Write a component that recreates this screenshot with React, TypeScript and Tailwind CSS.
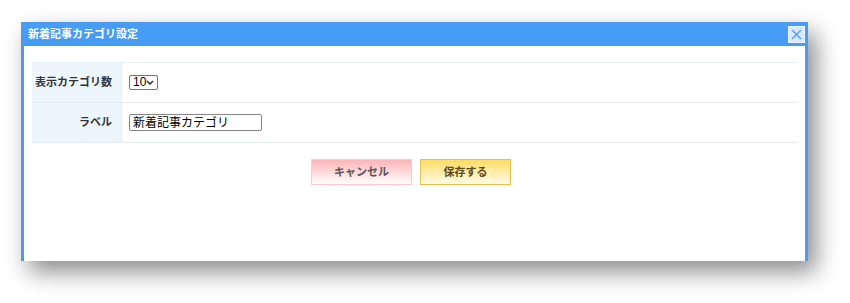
import React, { useState } from 'react';

const font = { fontFamily: '"Liberation Sans", "Noto Sans CJK JP", sans-serif' };

export default function App() {
  const [count, setCount] = useState('10');
  const [label, setLabel] = useState('新着記事カテゴリ');

  return (
    <div className="w-[850px] h-[303px] bg-white pt-[22px] pl-[21px] overflow-hidden" style={font}>
      <div className="w-[787px] h-[239px] bg-[#479cf4] px-[3px] flex flex-col shadow-[8px_11px_22px_rgba(0,0,0,0.45)]">
        {/* title bar */}
        <div className="h-[24px] flex items-center justify-between pl-[4px]">
          <span className="text-[11px] font-bold text-white leading-none">新着記事カテゴリ設定</span>
          <button className="w-[17px] h-[17px] bg-[#d9e8fb] border border-[#eef5fe] flex items-center justify-center">
            <svg width="11" height="11" viewBox="0 0 11 11">
              <path d="M1 1L10 10M10 1L1 10" stroke="#4a9ef5" strokeWidth="1.3" fill="none" />
            </svg>
          </button>
        </div>

        {/* body */}
        <div className="flex-1 bg-white pt-[16px] pl-[8px] pr-[7px]">
          <div className="border-t border-[#e8eef5]">
            <div className="flex h-[40px] border-b border-[#e3ebf3]">
              <div className="w-[90px] bg-[#eef6fd] border-r border-[#e3ebf3] flex items-center justify-end pr-[9px] text-[11px] font-bold text-[#333]">
                表示カテゴリ数
              </div>
              <div className="flex-1 flex items-center pl-[7px]">
                <div className="relative flex">
                  <select
                    value={count}
                    onChange={e => setCount(e.target.value)}
                    className="appearance-none w-[29px] h-[15px] border border-[#767676] rounded-[2px] bg-white text-[12px] leading-[13px] py-0 pl-[3px] text-black"
                  >
                    {['5', '10', '15', '20'].map(v => (
                      <option key={v} value={v}>{v}</option>
                    ))}
                  </select>
                  <svg className="absolute right-[4px] top-[5px] pointer-events-none" width="8" height="5" viewBox="0 0 8 5">
                    <path d="M1 1L4 4L7 1" stroke="#222" strokeWidth="1.4" fill="none" />
                  </svg>
                </div>
              </div>
            </div>
            <div className="flex h-[40px] border-b border-[#e3ebf3]">
              <div className="w-[90px] bg-[#eef6fd] border-r border-[#e3ebf3] flex items-center justify-end pr-[9px] text-[11px] font-bold text-[#333]">
                ラベル
              </div>
              <div className="flex-1 flex items-center pl-[7px]">
                <input
                  value={label}
                  onChange={e => setLabel(e.target.value)}
                  className="w-[133px] h-[17px] border border-[#858585] rounded-[2px] px-[3px] text-[12px] text-black"
                />
              </div>
            </div>
          </div>

          <div className="flex justify-center gap-[8px] mt-[16px] pr-[8px]">
            <button className="w-[101px] h-[26px] border border-[#ffc9cc] bg-gradient-to-b from-[#ffb3b7] to-white text-[11px] font-bold text-[#555]">
              キャンセル
            </button>
            <button className="w-[91px] h-[26px] border border-[#e6c04e] bg-gradient-to-b from-[#ffdc5e] to-[#fffbe6] text-[11px] font-bold text-[#5b4a1c]">
              保存する
            </button>
          </div>
        </div>
      </div>
    </div>
  );
}
